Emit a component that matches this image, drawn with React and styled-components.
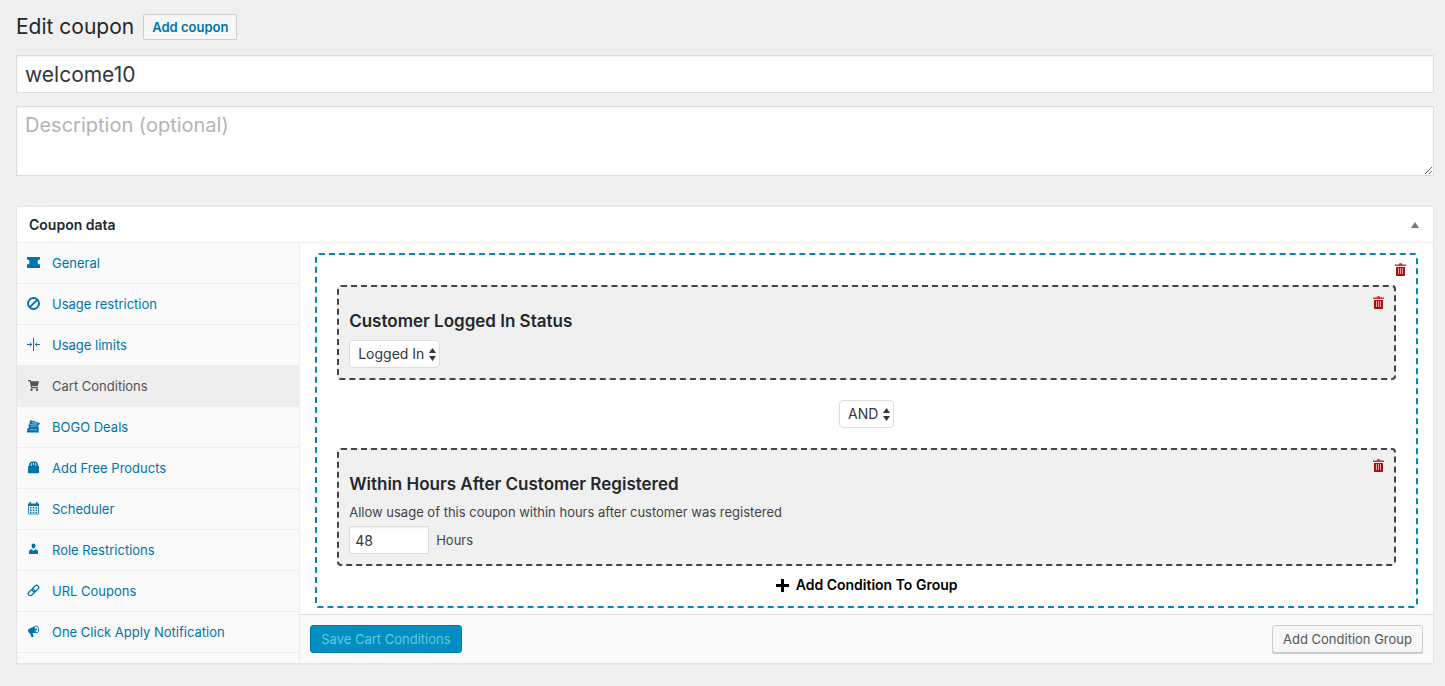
import React, { useState } from 'react';
import styled, { createGlobalStyle, css } from 'styled-components';

const tabs = [
  { label: 'General', icon: 'ticket' },
  { label: 'Usage restriction', icon: 'ban' },
  { label: 'Usage limits', icon: 'limits' },
  { label: 'Cart Conditions', icon: 'cart' },
  { label: 'BOGO Deals', icon: 'tickets' },
  { label: 'Add Free Products', icon: 'bag' },
  { label: 'Scheduler', icon: 'calendar' },
  { label: 'Role Restrictions', icon: 'user' },
  { label: 'URL Coupons', icon: 'link' },
  { label: 'One Click Apply Notification', icon: 'megaphone' },
];

const glyphs = {
  ticket: <path d="M0 1h13v2.500a2.300 2.300 0 0 0 0 5V12H0V8.500a2.300 2.300 0 0 0 0-5z" />,
  ban: (
    <g fill="none" stroke="currentColor" strokeWidth="1.9">
      <circle cx="6.5" cy="6.5" r="5.5" />
      <path d="M2.8 10.2l7.4-7.4" />
    </g>
  ),
  limits: (
    <g fill="none" stroke="currentColor" strokeWidth="1">
      <path d="M6.5 0v13M0 6.5h4.6M13 6.5H8.4" />
      <path d="M2.8 4.6l2 1.9-2 1.9M10.2 4.6l-2 1.9 2 1.9" />
    </g>
  ),
  cart: (
    <>
      <path d="M1 1h2.600l.5 1.200H12l-1.300 5H4.900l.2.800h5.700v1.200H4.200L2.700 2.200H1z" />
      <circle cx="4.500" cy="10.700" r="1.200" />
      <circle cx="10" cy="10.700" r="1.200" />
    </>
  ),
  tickets: (
    <>
      <path d="M2.600 1l1.600-1 .8.900 1.400-.1 4.900 2 1.700.1-.6 1.600-1 .5-.3 1.600.5.6-.5 1.300H2.300L1.200 4.900l1.400-.7-.4-.8.7-.6z" />
      <path d="M1.200 8h10.600v1.400a1 1 0 0 0 0 1.600v1.400H0V11a1 1 0 0 0 0-1.500L1.200 8z" />
      <path d="M2.900 4.500l7.400-.7M3.200 6.700l7-1.200M4.800 1.900l4.400 1.400M2.500 9.800h7.500" stroke="#fafafa" strokeWidth=".5" />
    </>
  ),
  bag: (
    <>
      <path d="M1 5h11v6.500a.7.7 0 0 1-.7.7H1.700a.7.7 0 0 1-.7-.7z" />
      <path d="M2 6V4.200C2 1.800 3.600.600 5 .600h3c1.400 0 3 1.200 3 3.600V6z" />
      <path d="M4.200 5V3.600c0-.8.4-1.300.9-1.600M8.800 5V3.600c0-.8-.4-1.300-.9-1.600M6.500 2v2" fill="none" stroke="#fafafa" strokeWidth=".9" />
    </>
  ),
  calendar: (
    <>
      <path d="M1 1.500h1.500V0H4v1.500h5V0h1.500v1.500H12V4H1z" />
      <path d="M1.500 4v8h10V4" fill="none" stroke="currentColor" strokeWidth=".8" />
      <path d="M3 5h1.500v1.500H3zM5.700 5h1.600v1.500H5.700zM8.500 5H10v1.500H8.500zM3 7.400h1.500v1.500H3zM5.700 7.400h1.600v1.500H5.700zM8.500 7.400H10v1.500H8.500zM3 9.700h1.500V11H3zM5.700 9.700h1.600V11H5.700zM8.500 9.700H10V11H8.500z" />
    </>
  ),
  user: (
    <>
      <ellipse cx="6.500" cy="3" rx="2" ry="2.400" />
      <path d="M2 11V8.600C2 7.200 3.400 6.500 4.700 6.300l1.800 1.700 1.800-1.700C9.600 6.500 11 7.200 11 8.600V11z" />
    </>
  ),
  link: (
    <g fill="none" stroke="currentColor" strokeWidth="1.3" transform="rotate(-45 6.500 6.500)">
      <rect x="0" y="4.500" width="7.400" height="4" rx="2" />
      <rect x="5.600" y="4.500" width="7.400" height="4" rx="2" />
    </g>
  ),
  megaphone: (
    <>
      <path d="M1 5.400c0-1 .7-1.700 1.700-1.900L9 .8l1.500 7-5 .2 1.200 3.500-2 .9L3 8.300C1.700 8.200 1 6.500 1 5.400z" />
      <ellipse cx="9.500" cy="4.300" rx="2.100" ry="3.400" fill="#fafafa" stroke="currentColor" strokeWidth=".9" transform="rotate(-12 9.500 4.300)" />
      <circle cx="9" cy="4.500" r="1.100" />
    </>
  ),
};

const TabGlyph = ({ name }) => (
  <Glyph viewBox="0 0 13 13" aria-hidden="true">
    {glyphs[name]}
  </Glyph>
);

const TrashButton = ({ label, corner }) => (
  <RemoveButton type="button" aria-label={label} $corner={corner}>
    <svg width="11" height="13" viewBox="0 0 11 13" aria-hidden="true">
      <path d="M3.500 1.500a2 1.500 0 0 1 4 0H11V3H0V1.500z" fill="#c9353a" />
      <path d="M1 4h9v8.300a.7.700 0 0 1-.7.700H1.700a.7.700 0 0 1-.7-.7z" fill="#b40b10" />
      <path d="M3.500 5v6M5.500 5v6M7.500 5v6" stroke="#e9a3a5" />
    </svg>
  </RemoveButton>
);

const SelectBox = ({ label, options }) => (
  <SelectWrap>
    <Select aria-label={label} defaultValue={options[0]}>
      {options.map((option) => (
        <option key={option}>{option}</option>
      ))}
    </Select>
    <Arrows viewBox="0 0 7 13" aria-hidden="true">
      <path d="M3.500 0L7 5H0zM0 8h7l-3.500 5z" />
    </Arrows>
  </SelectWrap>
);

const App = () => {
  const [active, setActive] = useState('Cart Conditions');

  return (
    <Page>
      <GlobalStyle />
      <TitleRow>
        <Title>Edit coupon</Title>
        <AddCoupon href="#add">Add coupon</AddCoupon>
      </TitleRow>

      <CodeInput type="text" aria-label="Coupon code" defaultValue="welcome10" />
      <Description aria-label="Description" placeholder="Description (optional)" />

      <Panel>
        <PanelHeader>
          <PanelTitle>Coupon data</PanelTitle>
          <Toggle type="button" aria-label="Toggle panel">
            <svg width="8" height="6" viewBox="0 0 8 6" aria-hidden="true">
              <path d="M4 0l4 6H0z" fill="currentColor" />
            </svg>
          </Toggle>
        </PanelHeader>

        <PanelBody>
          <Sidebar>
            {tabs.map((tab) => (
              <Tab
                key={tab.label}
                href="#tab"
                $active={tab.label === active}
                onClick={() => setActive(tab.label)}
              >
                <TabGlyph name={tab.icon} />
                {tab.label}
              </Tab>
            ))}
          </Sidebar>

          <Content>
            <Group>
              <TrashButton label="Remove group" corner="group" />
              <Condition>
                <TrashButton label="Remove condition" />
                <ConditionTitle>Customer Logged In Status</ConditionTitle>
                <SelectBox label="Customer Logged In Status" options={['Logged In', 'Guest']} />
              </Condition>

              <Operator>
                <SelectBox label="Operator" options={['AND', 'OR']} />
              </Operator>

              <Condition>
                <TrashButton label="Remove condition" />
                <ConditionTitle>Within Hours After Customer Registered</ConditionTitle>
                <Help>Allow usage of this coupon within hours after customer was registered</Help>
                <HoursField>
                  <HoursInput type="text" id="hours" defaultValue="48" />
                  <label htmlFor="hours">Hours</label>
                </HoursField>
              </Condition>

              <AddCondition type="button">
                <svg width="13" height="13" viewBox="0 0 13 13" aria-hidden="true">
                  <path d="M5 0h3v5h5v3H8v5H5V8H0V5h5z" />
                </svg>
                Add Condition To Group
              </AddCondition>
            </Group>

            <Footer>
              <SaveButton type="button">Save Cart Conditions</SaveButton>
              <GroupButton type="button">Add Condition Group</GroupButton>
            </Footer>
          </Content>
        </PanelBody>
      </Panel>
    </Page>
  );
};

export default App;

const GlobalStyle = createGlobalStyle`
  * {
    box-sizing: border-box;
  }

  body {
    margin: 0;
    background: #f0f0f0;
    color: #444;
    font-family: Inter, "Liberation Sans", sans-serif;
    font-size: 13px;
    line-height: 20px;
  }

  button,
  input,
  select,
  textarea {
    margin: 0;
    font-family: inherit;
  }
`;

const Page = styled.div`
  display: flex;
  flex-direction: column;
  padding: 14px 11px 22px 16px;
`;

const TitleRow = styled.div`
  display: flex;
  align-items: center;
  gap: 9px;
  margin-bottom: 15px;
`;

const Title = styled.h1`
  margin: 0;
  color: #23282d;
  font-size: 21px;
  font-weight: 400;
  line-height: 26px;
`;

const AddCoupon = styled.a`
  padding: 0 8px;
  border: 1px solid #ccc;
  border-radius: 2px;
  background: #f7f7f7;
  color: #0073aa;
  font-weight: 600;
  line-height: 24px;
  text-decoration: none;
`;

const fieldStyle = css`
  border: 1px solid #ddd;
  background: #fff;
  box-shadow: inset 0 1px 2px rgba(0, 0, 0, 0.07);
  color: #32373c;
`;

const CodeInput = styled.input`
  ${fieldStyle}
  width: 100%;
  height: 38px;
  margin-bottom: 13px;
  padding: 0 8px;
  font-size: 21px;
`;

const Description = styled.textarea`
  ${fieldStyle}
  display: block;
  width: 100%;
  height: 70px;
  margin-bottom: 30px;
  padding: 4px 8px;
  font-size: 20px;
  line-height: 28px;
  resize: vertical;

  &::placeholder {
    color: #b4b4b4;
  }
`;

const Panel = styled.section`
  border: 1px solid #e5e5e5;
  background: #fff;
  box-shadow: 0 1px 1px rgba(0, 0, 0, 0.04);
`;

const PanelHeader = styled.div`
  display: flex;
  align-items: center;
  justify-content: space-between;
  height: 36px;
  padding: 0 14px 0 12px;
  border-bottom: 1px solid #eee;
`;

const PanelTitle = styled.h2`
  margin: 0;
  color: #23282d;
  font-size: 14px;
  font-weight: 600;
`;

const Toggle = styled.button`
  display: flex;
  padding: 0;
  border: 0;
  background: none;
  color: #72777c;
`;

const PanelBody = styled.div`
  display: flex;
`;

const Sidebar = styled.nav`
  flex: 0 0 20%;
  border-right: 1px solid #eee;
  background: #fafafa;
`;

const Tab = styled.a`
  display: flex;
  align-items: center;
  gap: 12px;
  height: 41px;
  padding: 0 10px;
  border-bottom: 1px solid #eee;
  background: ${(props) => (props.$active ? '#eee' : 'transparent')};
  color: ${(props) => (props.$active ? '#555' : '#0073aa')};
  text-decoration: none;
`;

const Glyph = styled.svg`
  width: 13px;
  height: 13px;
  margin-bottom: 2px;
  fill: currentColor;
`;

const Content = styled.div`
  flex: 1;
  min-width: 0;
  padding-top: 10px;
`;

const Group = styled.div`
  position: relative;
  display: flex;
  flex-direction: column;
  margin: 0 15px 6px;
  padding: 30px 20px 11px;
  border: 2px dashed #0d84b5;
  border-radius: 4px;
`;

const Condition = styled.div`
  position: relative;
  padding: 22px 10px 10px;
  border: 2px dashed #444;
  border-radius: 4px;
  background: #f0f0f0;
`;

const ConditionTitle = styled.h3`
  margin: 0 0 7px;
  color: #23282d;
  font-size: 17px;
  font-weight: 600;
  line-height: 24px;
`;

const RemoveButton = styled.button`
  position: absolute;
  top: ${(props) => (props.$corner === 'group' ? '8px' : '9px')};
  right: 10px;
  display: flex;
  padding: 0;
  border: 0;
  background: none;
`;

const Operator = styled.div`
  display: flex;
  justify-content: center;
  padding: 20px 0;
`;

const SelectWrap = styled.span`
  display: inline-grid;
  align-items: center;
  vertical-align: top;
`;

const Select = styled.select`
  grid-area: 1 / 1;
  height: 28px;
  padding: 0 14px 2px 8px;
  border: 1px solid #ddd;
  border-radius: 4px;
  background: #fff;
  color: #32373c;
  font-size: 14px;
  appearance: none;
`;

const Arrows = styled.svg`
  grid-area: 1 / 1;
  justify-self: end;
  width: 7px;
  height: 13px;
  margin-right: 4px;
  fill: #32373c;
  pointer-events: none;
`;

const Help = styled.p`
  margin: 0 0 4px;
  line-height: 19px;
`;

const HoursField = styled.div`
  display: flex;
  align-items: center;
  gap: 7px;
`;

const HoursInput = styled.input`
  ${fieldStyle}
  width: 80px;
  height: 28px;
  padding: 0 5px;
  font-size: 14px;
`;

const AddCondition = styled.button`
  display: flex;
  align-items: center;
  align-self: center;
  gap: 7px;
  margin-top: 9px;
  padding: 0;
  border: 0;
  background: none;
  color: #000;
  font-size: 14px;
  font-weight: 600;
  line-height: 20px;
`;

const Footer = styled.div`
  display: flex;
  justify-content: space-between;
  padding: 10px;
  border-top: 1px solid #ddd;
  background: #fafafa;
`;

const FooterButton = styled.button`
  height: 28px;
  padding: 0 10px;
  border: 1px solid;
  border-radius: 3px;
  font-size: 13px;
`;

const SaveButton = styled(FooterButton)`
  border-color: #007cb2;
  background: #008ec2;
  color: #66c6e4;
`;

const GroupButton = styled(FooterButton)`
  border-color: #ccc;
  background: #f7f7f7;
  box-shadow: 0 1px 0 #ccc;
  color: #555;
`;
